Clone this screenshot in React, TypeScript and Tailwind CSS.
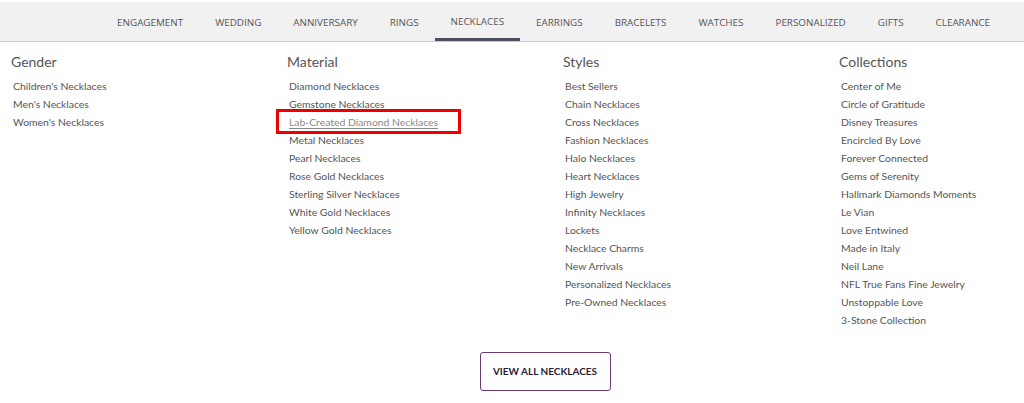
import React from "react";

const nav = ["ENGAGEMENT","WEDDING","ANNIVERSARY","RINGS","NECKLACES","EARRINGS","BRACELETS","WATCHES","PERSONALIZED","GIFTS","CLEARANCE"];

const cols: { title: string; links: string[] }[] = [
  { title: "Gender", links: ["Children's Necklaces","Men's Necklaces","Women's Necklaces"] },
  { title: "Material", links: ["Diamond Necklaces","Gemstone Necklaces","Lab-Created Diamond Necklaces","Metal Necklaces","Pearl Necklaces","Rose Gold Necklaces","Sterling Silver Necklaces","White Gold Necklaces","Yellow Gold Necklaces"] },
  { title: "Styles", links: ["Best Sellers","Chain Necklaces","Cross Necklaces","Fashion Necklaces","Halo Necklaces","Heart Necklaces","High Jewelry","Infinity Necklaces","Lockets","Necklace Charms","New Arrivals","Personalized Necklaces","Pre-Owned Necklaces"] },
  { title: "Collections", links: ["Center of Me","Circle of Gratitude","Disney Treasures","Encircled By Love","Forever Connected","Gems of Serenity","Hallmark Diamonds Moments","Le Vian","Love Entwined","Made in Italy","Neil Lane","NFL True Fans Fine Jewelry","Unstoppable Love","3-Stone Collection"] },
];

export default function App() {
  return (
    <div className="w-[1024px] h-[403px] bg-white overflow-hidden relative">
      <div className="pt-[2px] bg-white">
        <div className="h-[40px] bg-[#f1f1f1] border-b border-[#c9c9c9] flex justify-end pr-[18px]">
          {nav.map((n) => (
            <div
              key={n}
              className={`px-[16px] h-full flex items-center text-[9.85px] text-[#555] ${n === "NECKLACES" ? "border-b-[3px] border-[#4b4f5e] pt-[3px]" : "pt-[1px]"}`}
              style={{ fontFamily: '"Open Sans", sans-serif' }}
            >
              {n}
            </div>
          ))}
        </div>
      </div>
      <div className="flex pl-[11px] pt-[11px]" style={{ fontFamily: 'Lato, sans-serif' }}>
        {cols.map((c) => (
          <div key={c.title} className="w-[276px] shrink-0">
            <div className="text-[14px] text-[#555] leading-[18px]">{c.title}</div>
            <div className="mt-[6px] pl-[2px] flex flex-col">
              {c.links.map((l) =>
                l === "Lab-Created Diamond Necklaces" ? (
                  <div key={l} className="relative h-[18px] leading-[18px] text-[10.4px] text-[#888] underline underline-offset-2">
                    {l}
                    <div className="absolute left-[-13px] top-[-4px] w-[185px] h-[25px] border-[3px] border-[#ee0000]" />
                  </div>
                ) : (
                  <div key={l} className="h-[18px] leading-[18px] text-[10.4px] text-[#555]">
                    {l}
                  </div>
                )
              )}
            </div>
          </div>
        ))}
      </div>
      <div className="absolute left-0 right-0 top-[352px] flex justify-center">
        <div
          className="ml-[66px] w-[131px] h-[39px] border border-[#6e3a70] rounded-[3px] flex items-center justify-center text-[10px] font-bold text-[#2b1d35]"
          style={{ fontFamily: 'Lato, sans-serif' }}
        >
          VIEW ALL NECKLACES
        </div>
      </div>
    </div>
  );
}
